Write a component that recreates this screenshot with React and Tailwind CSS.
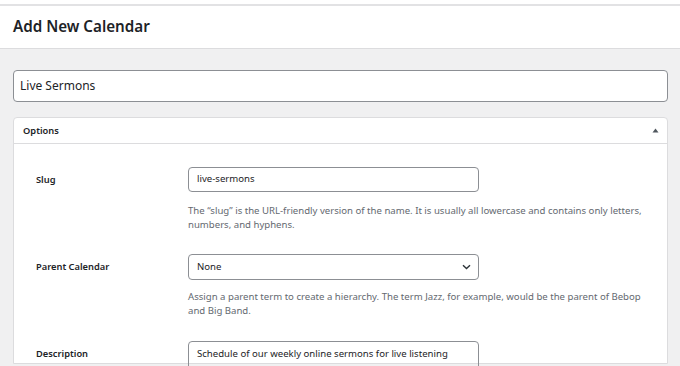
export default function App() {
  const font = { fontFamily: '"Noto Sans", "Open Sans", sans-serif' };
  return (
    <div className="w-[680px] h-[366px] overflow-hidden bg-[#f0f0f1] text-[#1d2327]" style={font}>
      <div className="h-[4px] bg-white" />
      <div className="h-[2px] bg-[#e2e2e4]" />
      <div className="h-[43px] bg-white border-b border-[#dcdcde] flex items-center pl-[13px]">
        <h1 className="text-[15.2px] font-semibold leading-none">Add New Calendar</h1>
      </div>
      <div className="px-[13px] pr-[12px] pt-[21px]">
        <div className="h-[32px] bg-white border border-[#8c8f94] rounded-[4px] flex items-center px-[6px] text-[12px]">
          Live Sermons
        </div>
        <div className="mt-[15px] bg-white border border-[#dcdcde] rounded-t-[4px] h-[247px]">
          <div className="h-[26px] border-b border-[#dcdcde] flex items-center justify-between pl-[9px] pr-[8px]">
            <span className="text-[9.3px] font-semibold">Options</span>
            <svg width="7" height="5" viewBox="0 0 7 5"><path d="M0.5 4.5 L3.5 0.5 L6.5 4.5 Z" fill="#50575e" /></svg>
          </div>
          <div className="pl-[22px] pt-[23px]">
            <div className="flex">
              <div className="w-[152px] h-[25px] flex items-center text-[9.3px] font-semibold">Slug</div>
              <div>
                <div className="w-[291px] h-[25px] border border-[#8c8f94] rounded-[4px] flex items-center px-[8px] text-[9.6px]">live-sermons</div>
                <p className="mt-[12px] text-[9.6px] leading-[14px] text-[#646970] w-[470px]">
                  The “slug” is the URL-friendly version of the name. It is usually all lowercase and contains only letters,<br />numbers, and hyphens.
                </p>
              </div>
            </div>
            <div className="flex mt-[22px]">
              <div className="w-[152px] h-[26px] flex items-center text-[9.3px] font-semibold">Parent Calendar</div>
              <div>
                <div className="w-[291px] h-[26px] border border-[#8c8f94] rounded-[4px] flex items-center justify-between pl-[8px] pr-[7px] text-[9.6px]">
                  <span>None</span>
                  <svg width="9" height="6" viewBox="0 0 9 6"><path d="M1 1.2 L4.5 4.5 L8 1.2" fill="none" stroke="#2c3338" strokeWidth="1.4" /></svg>
                </div>
                <p className="mt-[10px] text-[9.6px] leading-[14px] text-[#646970] w-[470px]">
                  Assign a parent term to create a hierarchy. The term Jazz, for example, would be the parent of Bebop<br />and Big Band.
                </p>
              </div>
            </div>
            <div className="flex mt-[23px]">
              <div className="w-[152px] h-[25px] flex items-center text-[9.3px] font-semibold">Description</div>
              <div className="w-[291px] h-[40px] border border-[#8c8f94] rounded-[4px] px-[8px] pt-[5px] text-[9.6px]">
                Schedule of our weekly online sermons for live listening
              </div>
            </div>
          </div>
        </div>
      </div>
    </div>
  );
}
